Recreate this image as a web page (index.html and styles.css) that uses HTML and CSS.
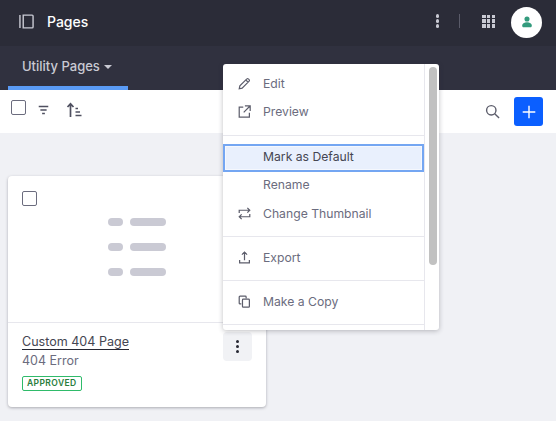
FILE: index.html
```html
<!DOCTYPE html>
<html lang="en">
<head>
<meta charset="utf-8">
<title>Pages</title>
<link rel="stylesheet" href="styles.css">
</head>
<body>
<header class="topbar">
  <svg class="ico panel-ico" viewBox="0 0 16 16"><path d="M1 1v14M4.500 1.200h9.500a1 1 0 0 1 1 1v11.600a1 1 0 0 1-1 1H4.500z"/></svg>
  <span class="title">Pages</span>
  <span class="top-actions">
    <span class="kebab kebab-light"><i></i><i></i><i></i></span>
    <span class="vsep"></span>
    <span class="apps"><i></i><i></i><i></i><i></i><i></i><i></i><i></i><i></i><i></i></span>
    <span class="avatar">
      <svg viewBox="0 0 16 16" class="avatar-ico"><circle cx="8" cy="4" r="3.400"/><path d="M1.500 13c0-3 2.800-4.600 6.500-4.600s6.500 1.600 6.500 4.600c0 1.200-.8 2-2 2h-9c-1.200 0-2-.8-2-2z"/></svg>
    </span>
  </span>
</header>
<nav class="tabs">
  <a class="tab">Utility Pages <span class="caret"></span></a>
</nav>
<div class="toolbar">
  <span class="check"></span>
  <svg class="ico filter-ico" viewBox="0 0 12 10"><path d="M.8 1.200h10.400M2.600 5h6.800M4.500 8.800h3"/></svg>
  <svg class="ico sort-ico" viewBox="0 0 16 16"><path d="M4.500 15V2M1.500 5l3-3.200 3 3.200M9.500 6.500h2.500M9.500 10h4.500M9.500 13.500h6"/></svg>
  <span class="spacer"></span>
  <svg class="ico search-ico" viewBox="0 0 16 16"><circle cx="6.700" cy="6.700" r="5"/><path d="M10.400 10.400l4.600 4.600"/></svg>
  <span class="add"><svg viewBox="0 0 16 16" class="add-ico"><path d="M8 .8v14.400M.8 8h14.400"/></svg></span>
</div>
<main class="content">
  <article class="card">
    <div class="card-top">
      <span class="check"></span>
      <div class="placeholder">
        <div class="ph-row"><b></b><u></u></div>
        <div class="ph-row"><b></b><u></u></div>
        <div class="ph-row"><b></b><u></u></div>
      </div>
    </div>
    <div class="card-body">
      <div class="card-text">
        <a class="card-title">Custom 404 Page</a>
        <div class="card-sub">404 Error</div>
        <span class="badge">APPROVED</span>
      </div>
      <span class="card-menu"><span class="kebab kebab-dark"><i></i><i></i><i></i></span></span>
    </div>
  </article>
</main>
<div class="menu">
  <div class="menu-list">
    <section class="menu-sec sec-a">
      <div class="item"><svg class="ico mi" viewBox="0 0 16 16"><path d="M1.500 14.500l.8-3.600 8.600-8.600a1.300 1.300 0 0 1 1.900 0l.9.9a1.300 1.300 0 0 1 0 1.900l-8.600 8.600zM9.600 3.600l2.800 2.800"/></svg>Edit</div>
      <div class="item"><svg class="ico mi" viewBox="0 0 16 16"><path d="M6.500 2.500H1.500v12.500h12.500V9.500M8.500 1h6.500v6.500M14.800 1.200L7 9"/></svg>Preview</div>
    </section>
    <section class="menu-sec sec-b">
      <div class="item active">Mark as Default</div>
      <div class="item">Rename</div>
      <div class="item item-gap"><svg class="ico mi" viewBox="0 0 16 16"><path d="M1.500 7.500V4h12.500M11.500 1l3 3-3 3M14.500 8.500V12H2M4.500 9l-3 3 3 3"/></svg>Change Thumbnail</div>
    </section>
    <section class="menu-sec sec-c">
      <div class="item"><svg class="ico mi" viewBox="0 0 16 16"><path d="M8 11.500V1.500M4.800 4.500L8 1.300l3.200 3.200M2 11v3.500h12V11"/></svg>Export</div>
    </section>
    <section class="menu-sec sec-c">
      <div class="item"><svg class="ico mi" viewBox="0 0 16 16"><path d="M4 11H2.500a1 1 0 0 1-1-1V2.500a1 1 0 0 1 1-1H9a1 1 0 0 1 1 1V4M6.500 5H13a1 1 0 0 1 1 1v8a1 1 0 0 1-1 1H6.500a1 1 0 0 1-1-1V6a1 1 0 0 1 1-1z"/></svg>Make a Copy</div>
    </section>
  </div>
  <div class="track"><div class="thumb"></div></div>
</div>
</body>
</html>
```
FILE: styles.css
```css
* { box-sizing: border-box; }
html, body { margin: 0; height: 100%; }
body {
  width: 556px;
  height: 421px;
  overflow: hidden;
  position: relative;
  background: #f0f1f5;
  font-family: Inter, "Liberation Sans", sans-serif;
  font-size: 12px;
  color: #6b6c7e;
}
.ico { fill: none; stroke: currentColor; stroke-width: 1.500; display: block; flex: none; }
.topbar {
  height: 46px;
  background: #2b2c38;
  display: flex;
  align-items: center;
  padding: 0 14px 0 19px;
  color: #fff;
}
.panel-ico { width: 15px; height: 15px; color: #c9cad3; margin-right: 13px; margin-top: -3px; }
.title { font-size: 14px; font-weight: 500; color: #fff; line-height: 16px; margin-top: -3px; }
.top-actions { margin-left: auto; display: flex; align-items: center; margin-top: -4px; }
.kebab { display: flex; flex-direction: column; gap: 1.500px; align-items: center; }
.kebab i { width: 3.500px; height: 3.500px; border-radius: 50%; background: currentColor; display: block; }
.kebab-light { color: #c9cad3; }
.vsep { width: 1px; height: 14px; background: #5a5b69; margin: 0 22px 0 20px; }
.apps { display: grid; grid-template-columns: repeat(3, 3.500px); gap: 1.250px; color: #c9cad3; margin-right: 16px; }
.apps i { width: 3.500px; height: 3.500px; background: currentColor; display: block; }
.avatar { width: 31px; height: 31px; border-radius: 50%; background: #fff; display: flex; align-items: center; justify-content: center; margin-top: 2px; }
.avatar-ico { width: 12px; height: 12px; fill: #339b7d; }
.tabs { height: 44px; background: #30313f; padding-left: 8px; display: flex; }
.tab {
  width: 120px;
  border-bottom: 4px solid #5a9bf5;
  padding-left: 14px;
  display: flex;
  align-items: center;
  gap: 4px;
  color: #c9cad3;
  font-size: 13px;
  font-weight: 500;
  height: 44px;
}
.caret { width: 0; height: 0; border-style: solid; border-color: #c9cad3 transparent transparent; border-width: 4.500px 4.500px 0; margin-top: 1px; }
.toolbar {
  height: 43px;
  background: #fff;
  display: flex;
  align-items: center;
  padding: 0 13px 0 11px;
  color: #6b6c7e;
}
.check { width: 15px; height: 15px; border: 1.500px solid #6b6c7e; border-radius: 2px; display: block; background: #fff; flex: none; }
.toolbar .check { margin-top: -8px; }
.filter-ico { width: 11px; height: 10px; margin: -3px 17px 0 12px; color: #4f5060; }
.sort-ico { width: 16px; height: 16px; margin-top: -3px; color: #4f5060; stroke-width: 1.700; }
.spacer { flex: 1; }
.search-ico { width: 15px; height: 15px; margin-right: 14px; color: #5c5d6b; }
.add { width: 29px; height: 29px; background: #0b5fff; border-radius: 3px; display: flex; align-items: center; justify-content: center; }
.add-ico { width: 14px; height: 14px; stroke: #fff; stroke-width: 1.600; fill: none; }
.content { padding: 43px 0 0 8px; }
.card { width: 258px; height: 231px; background: #fff; border-radius: 4px; box-shadow: 0 1px 3px rgba(39, 40, 51, .35); }
.card-top { height: 147px; border-bottom: 1px solid #e7e7ed; padding: 15px 0 0 14px; position: relative; }
.placeholder { position: absolute; left: 100px; top: 42px; display: flex; flex-direction: column; gap: 17.200px; }
.ph-row { display: flex; gap: 7px; height: 8px; }
.ph-row b { width: 15px; background: #cacad4; border-radius: 4px; display: block; }
.ph-row u { width: 35.500px; background: #cacad4; border-radius: 4px; display: block; }
.card-body { display: flex; padding: 7px 14px 0 14px; justify-content: space-between; }
.card-text { display: flex; flex-direction: column; align-items: flex-start; padding-top: 5px; }
.card-title { font-size: 12.550px; font-weight: 400; color: #454652; border-bottom: 1px solid #272833; line-height: 14px; }
.card-sub { font-size: 12.500px; color: #6b6c7e; margin-top: 3px; line-height: 15px; }
.badge { margin-top: 8px; border: 1px solid #2fbb6a; border-radius: 2px; font-size: 8.500px; font-weight: 600; letter-spacing: .4px; color: #287d3c; line-height: 13px; padding: 0 4px; height: 15px; }
.card-menu { width: 29px; height: 29px; background: #f1f2f5; border-radius: 4px; display: flex; align-items: center; justify-content: center; color: #272833; margin-top: 2px; }
.menu {
  position: absolute;
  left: 223px;
  top: 64px;
  width: 216px;
  height: 266px;
  background: #fff;
  border-radius: 3px;
  box-shadow: 0 1px 5px rgba(39, 40, 51, .3);
  display: flex;
  overflow: hidden;
}
.menu-list { width: 201px; padding-top: 6px; }
.menu-sec { padding: 8px 0; border-bottom: 1px solid #e7e7ed; }
.sec-a { padding: 0 0 9px; }
.sec-b { padding-bottom: 7px; }
.sec-c { padding-bottom: 7px; }
.item {
  height: 28px;
  display: flex;
  align-items: center;
  padding: 0 0 2px 40px;
  position: relative;
  font-size: 12.200px;
  color: #6b6c7e;
}
.sec-b .item, .sec-c .item { padding-bottom: 4px; }
.item-gap { margin-top: 1px; }
.mi { position: absolute; left: 15px; top: 7px; width: 13px; height: 13px; color: #5c5d6b; }
.sec-a .mi { top: 7px; }
.sec-b .mi, .sec-c .mi { top: 6px; }
.active { background: #e9f0fd; color: #454652; box-shadow: inset 0 0 0 2px #74a6f2, inset 0 0 0 3px #f5f8fe; }
.track { width: 15px; border-left: 1px solid #e7e7ed; padding: 3px 3px 0 4px; }
.thumb { width: 8px; height: 198px; background: #c1c1c1; border-radius: 4px; }
```
